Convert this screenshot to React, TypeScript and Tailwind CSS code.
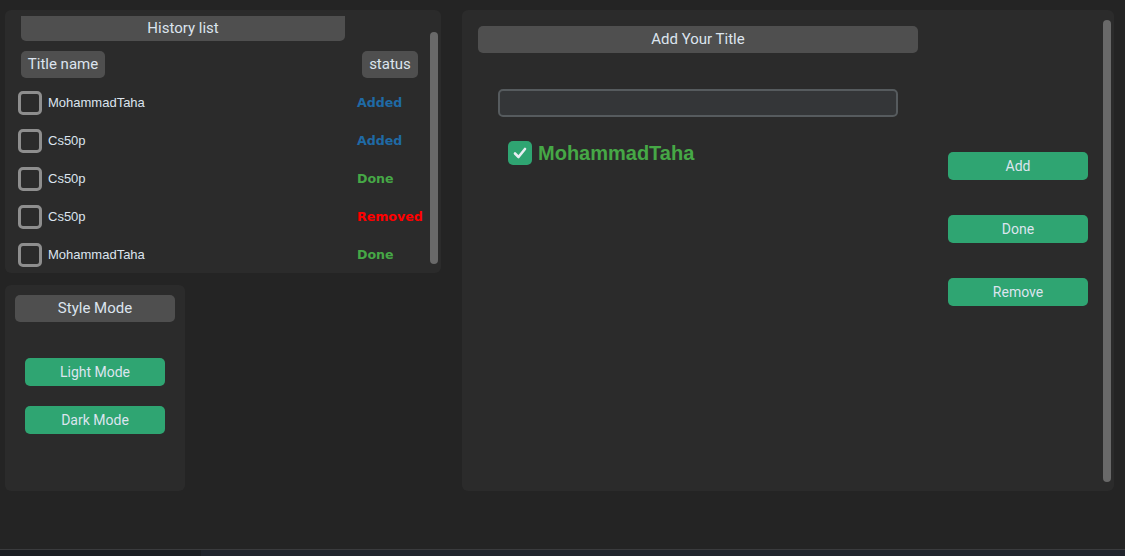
import React from "react";

const rows = [
  { name: "MohammadTaha", status: "Added", color: "text-[#1f6aa5]" },
  { name: "Cs50p", status: "Added", color: "text-[#1f6aa5]" },
  { name: "Cs50p", status: "Done", color: "text-[#46a846]" },
  { name: "Cs50p", status: "Removed", color: "text-[#ff0000]" },
  { name: "MohammadTaha", status: "Done", color: "text-[#46a846]" },
];

const ui = { fontFamily: "Roboto, 'Open Sans', sans-serif" };

function GreenButton({ label }: { label: string }) {
  return (
    <div
      className="w-[140px] h-[28px] rounded-[5px] bg-[#2fa572] text-[#dce4ee] text-[14px] flex items-center justify-center"
      style={ui}
    >
      {label}
    </div>
  );
}

export default function App() {
  return (
    <div className="w-[1125px] h-[556px] bg-[#242424] flex flex-col overflow-hidden">
      <div className="flex-1 flex pt-[10px] pl-[5px]">
        {/* Left column */}
        <div className="flex flex-col w-[436px] gap-[12px]">
          {/* History panel */}
          <div className="w-[436px] h-[263px] rounded-[6px] bg-[#2b2b2b] flex">
            <div className="w-[425px] flex flex-col">
              <div
                className="ml-[16px] mt-[6px] w-[324px] h-[25px] rounded-b-[5px] bg-[#4f4f4f] text-[#dce4ee] text-[15px] flex items-center justify-center"
                style={ui}
              >
                History list
              </div>
              <div className="ml-[16px] mt-[10px] w-[397px] flex justify-between">
                <div
                  className="h-[27px] w-[84px] rounded-[5px] bg-[#4f4f4f] text-[#dce4ee] text-[15px] flex items-center justify-center"
                  style={ui}
                >
                  Title name
                </div>
                <div
                  className="h-[27px] w-[56px] rounded-[5px] bg-[#4f4f4f] text-[#dce4ee] text-[15px] flex items-center justify-center"
                  style={ui}
                >
                  status
                </div>
              </div>
              <div className="ml-[13px] mt-[13px] flex flex-col gap-[14px]">
                {rows.map((r, i) => (
                  <div key={i} className="flex items-center h-[24px]">
                    <div className="w-[339px] flex items-center">
                      <div className="w-[24px] h-[24px] rounded-[5px] border-[3px] border-[#8e8e8e]" />
                      <span
                        className="ml-[6px] text-[13px] text-[#dce4ee]"
                        style={{ fontFamily: "'Liberation Sans', Arial, sans-serif" }}
                      >
                        {r.name}
                      </span>
                    </div>
                    <span
                      className={`text-[12.6px] font-bold ${r.color}`}
                      style={{ fontFamily: "'DejaVu Sans', Verdana, sans-serif" }}
                    >
                      {r.status}
                    </span>
                  </div>
                ))}
              </div>
            </div>
            <div className="mt-[22px] w-[8px] h-[232px] rounded-full bg-[#696969]" />
          </div>

          {/* Style mode panel */}
          <div className="w-[180px] h-[206px] rounded-[6px] bg-[#2b2b2b] flex flex-col items-center">
            <div
              className="mt-[10px] w-[160px] h-[27px] rounded-[5px] bg-[#4f4f4f] text-[#dce4ee] text-[15px] flex items-center justify-center"
              style={ui}
            >
              Style Mode
            </div>
            <div className="mt-[36px] flex flex-col gap-[20px]">
              <GreenButton label="Light Mode" />
              <GreenButton label="Dark Mode" />
            </div>
          </div>
        </div>

        {/* Right panel */}
        <div className="ml-[21px] w-[652px] h-[481px] rounded-[6px] bg-[#2b2b2b] flex">
          <div className="w-[641px] flex flex-col">
            <div
              className="ml-[16px] mt-[16px] w-[440px] h-[27px] rounded-[5px] bg-[#4f4f4f] text-[#dce4ee] text-[15px] flex items-center justify-center"
              style={ui}
            >
              Add Your Title
            </div>
            <div className="flex">
              <div className="w-[486px] flex flex-col pt-[36px]">
                <div className="ml-[36px] w-[400px] h-[28px] rounded-[5px] border-2 border-[#565b5e] bg-[#343638]" />
                <div className="ml-[46px] mt-[24px] h-[24px] flex items-center">
                  <div className="w-[24px] h-[24px] rounded-[5px] bg-[#2fa572] flex items-center justify-center">
                    <svg width="16" height="16" viewBox="0 0 16 16">
                      <path
                        d="M3 8.5 L6.5 12 L13 4"
                        fill="none"
                        stroke="#e8eef2"
                        strokeWidth="2.6"
                        strokeLinecap="round"
                        strokeLinejoin="round"
                      />
                    </svg>
                  </div>
                  <span
                    className="ml-[6px] text-[20px] leading-[24px] font-bold text-[#46a846]"
                    style={{ fontFamily: "'Liberation Sans', Arial, sans-serif" }}
                  >
                    MohammadTaha
                  </span>
                </div>
              </div>
              <div className="pt-[99px] flex flex-col gap-[35px]">
                <GreenButton label="Add" />
                <GreenButton label="Done" />
                <GreenButton label="Remove" />
              </div>
            </div>
          </div>
          <div className="mt-[10px] w-[8px] h-[462px] rounded-full bg-[#696969]" />
        </div>
      </div>
      <div className="h-[1px] bg-[#3a3b3d]" />
      <div className="h-[6px] flex">
        <div className="w-[201px] bg-[#1c1e22]" />
        <div className="flex-1 bg-[#21242c]" />
      </div>
    </div>
  );
}
